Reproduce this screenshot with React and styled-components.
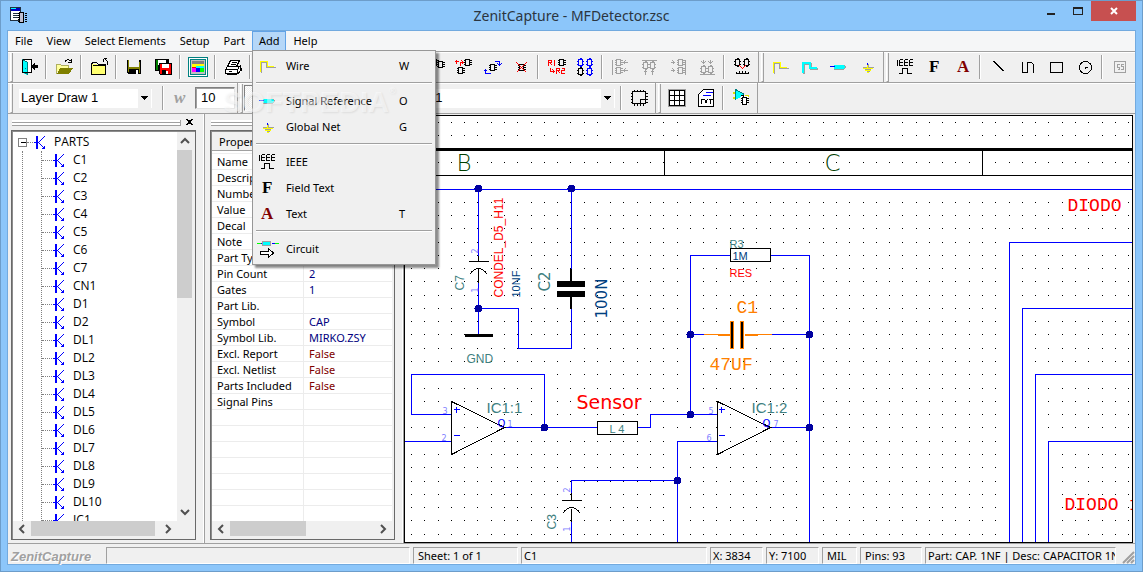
import React from "react";
import styled, { createGlobalStyle, css } from "styled-components";

const GlobalStyle = createGlobalStyle`
  *, *::before, *::after { box-sizing: border-box; }
  body { margin: 0; background: #8cc6fa; }
  button, input, select { font: inherit; color: inherit; margin: 0; padding: 0; border: 0; border-radius: 0; background: none; }
`;

/* ---------- window frame ---------- */

const Window = styled.div`
  position: relative;
  display: flex;
  flex-direction: column;
  height: 100vh;
  min-height: 400px;
  padding: 0 6px 6px;
  border: 1px solid #6d9dca;
  background: #8cc6fa;
  font-family: "Noto Sans", "Open Sans", sans-serif;
  font-size: 11px;
  line-height: 16px;
  color: #000;
  overflow: hidden;
`;
const TitleBar = styled.header`
  display: grid;
  grid-template-columns: 1fr auto 1fr;
  height: 29px;
  flex: none;
`;
const AppIcon = styled.div`
  padding: 6px 0 0 3px;
`;
const Title = styled.h1`
  margin: 0;
  font-size: 14px;
  font-weight: 400;
  line-height: 29px;
  color: #2b3540;
`;
const WindowButtons = styled.div`
  display: flex;
  justify-content: flex-end;
`;
const WindowButton = styled.button`
  width: ${(p) => (p.$close ? 45 : 27)}px;
  height: 20px;
  display: flex;
  align-items: center;
  justify-content: center;
  background: ${(p) => (p.$close ? "#c75050" : "transparent")};
`;
const Client = styled.div`
  flex: 1;
  min-height: 0;
  display: flex;
  flex-direction: column;
  border: 1px solid #72aadf;
  background: #f0f0f0;
`;

/* ---------- menu bar ---------- */

const MenuBar = styled.nav`
  display: flex;
  flex: none;
  height: 20px;
  background: #f5f6f7;
`;
const MenuEntry = styled.div`
  position: relative;
  display: flex;
`;
const MenuButton = styled.button`
  padding: 0 6px;
  border: 1px solid ${(p) => (p.$open ? "#62a3e6" : "transparent")};
  background: ${(p) => (p.$open ? "#b5d7f8" : "transparent")};
`;
const Menu = styled.div`
  position: absolute;
  z-index: 5;
  top: 19px;
  left: 0;
  width: 184px;
  padding: 2px;
  border: 1px solid #979797;
  background: #f0f0f0;
  box-shadow: 3px 3px 2px rgba(0, 0, 0, 0.45);
`;
const MenuItem = styled.button`
  display: grid;
  grid-template-columns: 31px 1fr 34px;
  align-items: center;
  width: 100%;
  height: 26px;
  text-align: left;
`;
const MenuRule = styled.hr`
  height: 9px;
  margin: 0 1px;
  border: 0;
  background: linear-gradient(transparent 3px, #a0a0a0 3px 4px, #fff 4px 5px, transparent 5px);
`;

/* ---------- tool bars ---------- */

const ToolRow = styled.div`
  display: flex;
  flex: none;
  height: 31px;
  border-top: 1px solid #a0a0a0;
  box-shadow: inset 0 1px #fff;
  overflow: hidden;
`;
const ToolGroup = styled.div`
  display: flex;
  align-items: center;
  flex: none;
  padding-right: 2px;
  border-right: 1px solid #a0a0a0;
  &::before {
    content: "";
    align-self: stretch;
    width: 3px;
    margin: 1px 1px 0 2px;
    border: solid;
    border-width: 0 1px 1px;
    border-color: #fff #a0a0a0 #a0a0a0 #fff;
  }
  &:last-child { border-right-width: ${(p) => (p.$open ? 0 : 1)}px; }
`;
const ToolButton = styled.button`
  width: 29px;
  height: 26px;
  flex: none;
  display: flex;
  align-items: center;
  justify-content: center;
  ${(p) => p.$pressed && css`
    border: 1px solid;
    border-color: #808080 #fff #fff #808080;
    background: repeating-conic-gradient(#fff 0 25%, #f0f0f0 0 50%) 0 0 / 2px 2px;
  `}
`;
const ToolRule = styled.span`
  flex: none;
  width: 6px;
  height: 24px;
  background: linear-gradient(90deg, transparent 2px, #a0a0a0 2px 3px, #fff 3px 4px, transparent 4px);
`;
const ComboBox = styled.label`
  position: relative;
  display: flex;
  flex: none;
  width: ${(p) => p.$width}px;
  height: 19px;
  margin: 0 ${(p) => p.$gap}px 0 5px;
  font-family: "Liberation Sans", Arial, sans-serif;
  font-size: 13px;
  background: #fff;
  select {
    appearance: none;
    width: 100%;
    padding-left: 2px;
    line-height: 18px;
  }
`;
const ComboArrow = styled.span`
  position: absolute;
  top: 0;
  right: 1px;
  width: 13px;
  height: 19px;
  display: flex;
  align-items: center;
  justify-content: center;
  background: #f0f0f0;
  pointer-events: none;
`;
const SizeInput = styled.input`
  && {
    width: 40px;
    height: 22px;
    padding: 0 5px 2px;
    border: 1px solid;
    border-color: #808080 #e3e3e3 #e3e3e3 #808080;
    background: #fff;
    box-shadow: inset 1px 1px #a0a0a0;
    font-family: "Liberation Sans", Arial, sans-serif;
    font-size: 13px;
  }
`;

/* ---------- docked panels ---------- */

const Main = styled.main`
  flex: 1;
  min-height: 0;
  display: flex;
  border-top: 1px solid #a0a0a0;
`;
const Dock = styled.section`
  flex: none;
  display: flex;
  flex-direction: column;
  width: ${(p) => p.$left + 194}px;
  padding: 0 8px 3px ${(p) => p.$left}px;
  border-right: 1px solid #a0a0a0;
  box-shadow: inset -1px 0 #fff;
`;
const DockHandle = styled.div`
  flex: none;
  display: flex;
  align-items: center;
  gap: 5px;
  height: 16px;
  padding: 1px 3px 0 1px;
  &::before {
    content: "";
    flex: 1;
    height: 6px;
    border-right: 1px solid #a0a0a0;
    background: repeating-linear-gradient(#fff 0 2px, #a0a0a0 2px 3px);
  }
`;
const DockClose = styled.button`
  display: flex;
`;
const Sunken = styled.div`
  flex: 1;
  min-height: 0;
  display: flex;
  flex-direction: column;
  padding: 1px 2px 2px 1px;
  border: 1px solid #696969;
  background: #f0f0f0;
  box-shadow: inset 1px 1px #8c8c8c;
`;
const ScrollBody = styled.div`
  flex: 1;
  min-height: 0;
  display: flex;
`;
const Viewport = styled.div`
  flex: 1;
  min-width: 0;
  padding-top: ${(p) => p.$top || 0}px;
  overflow: hidden;
  background: #fff;
`;
const Bar = styled.div`
  flex: none;
  display: flex;
  flex-direction: ${(p) => (p.$vertical ? "column" : "row")};
  width: ${(p) => (p.$vertical ? "16px" : "auto")};
  height: ${(p) => (p.$vertical ? "auto" : "16px")};
  margin-right: ${(p) => (p.$corner ? 16 : 0)}px;
  background: #f0f0f0;
`;
const BarArrow = styled.button`
  flex: none;
  width: ${(p) => (p.$vertical ? 15 : 18)}px;
  height: ${(p) => (p.$vertical ? 18 : 15)}px;
  display: flex;
  align-items: center;
  justify-content: center;
`;
const BarTrack = styled.div`
  flex: 1;
`;
const BarThumb = styled.div`
  width: ${(p) => (p.$vertical ? "15px" : p.$part)};
  height: ${(p) => (p.$vertical ? p.$part : "15px")};
  background: #cdcdcd;
`;

const TreeRow = styled.div`
  display: flex;
  align-items: center;
  height: 18px;
`;
const Expander = styled.button`
  display: flex;
  margin-left: 5px;
`;
const Branch = styled.span`
  width: ${(p) => p.$width}px;
  border-top: 1px dotted #808080;
`;
const TreeLabel = styled.span`
  margin-left: 9px;
  font-family: "Open Sans", "Noto Sans", sans-serif;
  font-size: 12px;
`;
const RootItems = styled.div`
  margin-left: 9px;
  padding-left: 18px;
  border-left: 1px dotted #808080;
`;
const TreeList = styled.ul`
  margin: 0;
  padding: 0;
  list-style: none;
  border-left: 1px dotted #808080;
`;

const PropTable = styled.table`
  width: 100%;
  table-layout: fixed;
  border-collapse: separate;
  border-spacing: 0;
  th, td {
    padding: 0 0 0 5px;
    font-weight: 400;
    text-align: left;
    white-space: nowrap;
    overflow: hidden;
  }
  thead th {
    height: 22px;
    padding: 0 0 2px 7px;
    background: linear-gradient(#f0f0f0 18px, #a0a0a0 18px 19px, #fff 19px 21px, #eee 21px);
  }
  thead th:first-child { width: 92px; }
  tbody th, tbody td {
    height: 16px;
    line-height: 15px;
    border-bottom: 1px solid #ececec;
  }
  tbody th { border-right: 1px solid #ececec; }
`;
const PropValue = styled.td`
  color: ${(p) => (p.$flag ? "#800000" : "#000080")};
`;

const Canvas = styled.section`
  flex: 1;
  min-width: 0;
  margin: 1px 2px 0 0;
  border: 1px solid #000;
  background: #fff;
  overflow: hidden;
  svg { display: block; width: 100%; height: 100%; }
`;

/* ---------- status bar ---------- */

const StatusBar = styled.footer`
  flex: none;
  display: flex;
  gap: 3px;
  height: 21px;
  padding-top: 3px;
  border-top: 1px solid #a0a0a0;
`;
const Brand = styled.strong`
  width: 95px;
  padding-left: 3px;
  font-family: "Liberation Sans", Arial, sans-serif;
  font-size: 13px;
  font-style: italic;
  line-height: 19px;
  color: #a0a0a0;
  text-shadow: 1px 1px #fff;
`;
const Cell = styled.div`
  flex: ${(p) => (p.$grow ? `${p.$width} 1 0` : `0 0 ${p.$width}px`)};
  min-width: 0;
  padding-left: ${(p) => p.$pad || 2}px;
  border: 1px solid;
  border-color: #a0a0a0 #fff #fff #a0a0a0;
  line-height: 15px;
  white-space: nowrap;
  overflow: hidden;
`;
const Grip = styled.div`
  flex: 1;
  min-width: 16px;
  display: flex;
  align-items: flex-end;
  justify-content: flex-end;
`;
const Watermark = styled.div`
  position: absolute;
  z-index: 6;
  left: 222px;
  top: 84px;
  display: flex;
  align-items: flex-start;
  font-family: "Liberation Sans", Arial, sans-serif;
  font-size: 29px;
  font-weight: 700;
  line-height: 34px;
  color: rgba(255, 255, 255, 0.5);
  text-shadow: 1px 1px 2px rgba(0, 0, 0, 0.08);
  pointer-events: none;
  sup { font-size: 9px; line-height: 12px; }
`;

/* ---------- icons ---------- */

const Art = ({ w = 24, h = 22, children }) => (
  <svg width={w} height={h} viewBox={`0 0 ${w} ${h}`} shapeRendering="crispEdges" fill="none" aria-hidden="true">
    {children}
  </svg>
);
const Line = ({ d, c = "#000", w = 1 }) => (
  <path d={d} stroke={c} strokeWidth={w} transform="translate(.5 .5)" />
);
const Chip = ({ x, y, c = "#000" }) => (
  <g transform={`translate(${x} ${y})`}>
    <Line c={c} d="M1 0h4v6h-4zM-1 1h2M-1 3h2M-1 5h2M5 1h2M5 3h2M5 5h2" />
  </g>
);
const TallChip = ({ x, y, c = "#000" }) => (
  <g transform={`translate(${x} ${y})`}>
    <Line c={c} d="M1 1h4v6h-4zM0 2v1M0 5v1M6 2v1M6 5v1M2 0h2M2 8h2" />
  </g>
);

const icons = {
  exit: <><path d="M7 3h8v13H7z" fill="#fff" /><Line d="M5 3h9v13h-4" /><path d="M5 3l5 3v13l-5-3z" fill="#0ff" /><Line d="M5 3v12l5 3V6L5 3M8 11v1" c="#008080" /><Line d="M5 3v13h5" /><path d="M14 10l4-4v3h3v3h-3v3z" fill="#000" /></>,
  open: <><path d="M4 8h5v1h7v3H9l-5 6z" fill="#ffff9c" /><Line d="M4 17V8h4l1 1h7v2" c="#b0b060" /><path d="M8 12h13l-4 6H5z" fill="#808000" /><Line d="M12 6q3-5 7-1M19 2v4h-4" /></>,
  folder: <><path d="M4 8h5l2 1h7v10H4z" fill="#ffff70" /><Line d="M4 18V8l1-2h4l2 2h7v10zM5 9h12" /><Line d="M20 8V5l-3-3M16 2h3M16 2v3" /></>,
  save: <><path d="M5 4h14v14H6l-1-1z" fill="#000" /><path d="M7 4h10v7H7z" fill="#f0f0f0" /><path d="M6 4h1v12H6zM17 6h1v11h-1zM7 11h10v2H7z" fill="#808000" /><path d="M14 14h2v4h-2z" fill="#fff" /></>,
  saveAll: <><path d="M4 3h14v12H4z" fill="#000" /><path d="M5 4h2v10H5z" fill="#008000" /><path d="M7 4h8v5H7z" fill="#fff" /><path d="M8 7h13v12H9l-1-1z" fill="#000" /><path d="M9 8h11v10H9z" fill="red" /><path d="M11 8h7v4h-7zM15 15h2v3h-2z" fill="#fff" /><path d="M11 14h4v4h-4z" fill="#000" /></>,
  palette: <><path d="M2 1h20v20H2z" fill="#008080" /><path d="M3 2h18v18H3z" fill="#fff" /><path d="M4 3h16v16H4z" fill="#008080" /><path d="M5 4h14v14H5z" fill="#c0c0c0" /><path d="M6 5h12v3H6z" fill="#808080" /><path d="M6 8h12v3H6z" fill="#ff0" /><path d="M6 11h4v2H6z" fill="red" /><path d="M10 10h8v2h-8z" fill="#0ff" /><path d="M6 12h6v4H6z" fill="#f0f" /><path d="M10 12h4v4h-4z" fill="#00f" /><path d="M14 12h4v4h-4z" fill="lime" /></>,
  print: <><path d="M9 4h10l-3 7H6z" fill="#fff" /><Line d="M9 4h9l-3 6M9 4l-3 6M10 6h5M9 8h5" /><path d="M6 10h13l1-1v7l-2 2H6l-2-2v-4z" fill="#fff" /><Line d="M6 10h12l-2 3H4l2-3M4 13v4h12v-4M18 10l1-1v5l-3 3M6 17v1h9l4-3M7 15h3M20 11v3" /></>,
  chip: <><Chip x="9" y="3" /><Chip x="15" y="5" /></>,
  chipAdd: <><Chip x="13" y="3" /><Chip x="6" y="11" /><Line c="red" d="M3 5h4M5 3v4M9 9V6h2M10 4l2 2-2 2" /></>,
  chipMove: <><Chip x="9" y="8" /><Line c="#00f" d="M14 5h5v4M17 7l2 2 2-2M10 17H5v-4M3 15l2-2 2 2" /></>,
  chipDel: <><Chip x="9" y="8" /><Line c="red" d="M7 6l10 10M17 6L7 16" /></>,
  rename: <><Line c="red" d="M4 9V4h3v2H4M6 6l1 3M9 5l1-1v5M12 17v-5h3v2h-3M14 14l1 3M17 12h3v2h-3v3h3M6 11v4h4M8 13l2 2-2 2" /><Chip x="14" y="3" /></>,
  chips4: <><TallChip x="4" y="2" c="#00f" /><TallChip x="13" y="2" c="#00f" /><TallChip x="4" y="11" /><TallChip x="13" y="11" c="#00f" /></>,
  alignL: <><Line c="#a0a0a0" d="M4 3v15M15 6h4M15 6l2-2M15 6l2 2M15 14h4M15 14l2-2M15 14l2 2" /><Chip x="7" y="3" c="#a0a0a0" /><Chip x="7" y="11" c="#a0a0a0" /></>,
  alignT: <><Line c="#a0a0a0" d="M4 4h15M8 14v4M6 16l2-2 2 2M15 14v4M13 16l2-2 2 2" /><TallChip x="5" y="5" c="#a0a0a0" /><TallChip x="12" y="5" c="#a0a0a0" /></>,
  alignR: <><Line c="#a0a0a0" d="M19 3v15M4 6h4M8 6L6 4M8 6L6 8M4 14h4M8 14l-2-2M8 14l-2 2" /><Chip x="11" y="3" c="#a0a0a0" /><Chip x="11" y="11" c="#a0a0a0" /></>,
  alignB: <><Line c="#a0a0a0" d="M4 18h15M8 3v4M6 5l2 2 2-2M15 3v4M13 5l2 2 2-2" /><TallChip x="5" y="9" c="#a0a0a0" /><TallChip x="12" y="9" c="#a0a0a0" /></>,
  measure: <><TallChip x="4" y="2" /><TallChip x="13" y="2" /><Line c="red" d="M9 9l3 3 3-3" /><Line d="M6 17h12M6 15v2M9 14v3M12 14v3M15 14v3M18 15v2" /></>,
  wire: <><Line c="#a0a0a0" d="M6 17V7h5v5h9" /><Line c="#ff0" d="M5 16V6h7v5h6" /></>,
  bus: <><Line c="#a0a0a0" w={2} d="M6 17V7h7v5h7" /><Line c="#0ff" w={2} d="M5 16V6h7v5h7" /></>,
  signal: <><path d="M8 9h10l2 2-2 3H8z" fill="#a0a0a0" /><path d="M8 9h9l2 2-2 2H8z" fill="#0ff" /><Line c="#00f" d="M3 10h5" /></>,
  ground: <><Line c="#a0a0a0" d="M7 11h11M9 13h6M11 15h3M13 7v4" /><Line c="#ff0" d="M12 8v4M7 12h10M9 14h6M11 16h2" /><Line c="#00f" d="M12 6v2" /></>,
  ieee: <Line d="M4 3v6M6 3h3M6 6h3M6 9h3M6 3v6M11 3h3M11 6h3M11 9h3M11 3v6M16 3h3M16 6h3M16 9h3M16 3v6M5 17h4v-5h5v5h4" />,
  field: <text x="7" y="16" fill="#000" fontFamily="Liberation Serif, serif" fontSize="17" fontWeight="700">F</text>,
  text: <text x="6" y="16" fill="#800000" fontFamily="Liberation Serif, serif" fontSize="17" fontWeight="700">A</text>,
  line: <Line d="M7 5l10 10M8 5l10 10" />,
  polyline: <Line d="M7 5v11h5V6h4l2 2v8" />,
  rect: <Line d="M6 6h12v10H6z" />,
  circle: <><circle cx="12.500" cy="11.500" r="6" stroke="#000" /><Line d="M12 10v2M11 11h3" /></>,
  bitmap: <><Line c="#a0a0a0" d="M6 5h11v11H6zM11 8H9v3h2v2H9M15 8h-2v2h2v3h-3" /></>,
  weight: <text x="5" y="16" fill="#a0a0a0" fontFamily="Liberation Serif, serif" fontSize="17" fontWeight="700" fontStyle="italic">w</text>,
  lines: <Line w={2} d="M5 5h14M5 10h14M5 15h14" />,
  sheet: <><Line d="M5 4h13v12H5zM13 16v-4h5" /><Line d="M7 2v2M10 2v2M13 2v2M16 2v2M7 16v2M10 16v2M13 16v2M16 16v2M3 6h2M3 9h2M3 12h2M3 15h2M18 6h2M18 9h2M18 12h2M18 15h2" /></>,
  grid: <><path d="M3 2h18v18H3z" fill="#a0a0a0" /><path d="M4 3h16v16H4z" fill="#fff" /><Line d="M4 3h15v15H4zM9 3v15M14 3v15M4 8h15M4 13h15" /></>,
  txt: <><path d="M9 2h11v17H4V7z" fill="#fff" /><Line d="M9 2h10v17H4V7zM6 12h3M7 12v4M10 12l3 4M13 12l-3 4M14 12h4M16 12v4" /><Line c="#00f" d="M11 5h7M8 8h8" /></>,
  convert: <><Line c="#e0e000" w={2} d="M3 5h3M3 10h3M15 8h4" /><path d="M6 2l10 6-10 5z" fill="#0ff" /><Line d="M6 2v10M6 2l9 5" c="#008080" /><path d="M12 9h7v9h-7z" fill="#fff" /><Line d="M13 10h4v7h-4zM11 11h2M11 13h2M11 15h2M17 11h2M17 13h2M17 15h2M11 8h3v2" /></>,
  undo: <Line d="M6 10h10v5M6 10l3-3M6 10l3 3" />,
  circuit: <><Line c="lime" d="M1 5h4M19 5h4" /><Line c="#00f" d="M5 5h2M16 5h3" /><path d="M7 3h9v5H7z" fill="#a0a0a0" /><path d="M8 4h7v3H8z" fill="#0ff" /><path d="M5.500 13.500h8v-3l5 4.500-5 4.500v-3h-8z" fill="#fff" stroke="#000" /></>,
};

const Tool = ({ icon, label, pressed }) => (
  <ToolButton type="button" aria-label={label} $pressed={pressed}>
    <Art>{icons[icon]}</Art>
  </ToolButton>
);
const Tools = ({ items }) =>
  items.map((item, i) =>
    item === "|" ? <ToolRule key={i} /> : <Tool key={i} icon={item[0]} label={item[1]} pressed={item[2]} />
  );

const Combo = ({ label, value, width, gap }) => (
  <ComboBox $width={width} $gap={gap}>
    <select aria-label={label} defaultValue={value}>
      <option>{value}</option>
    </select>
    <ComboArrow>
      <Art w={7} h={4}><path d="M0 0h7L3.500 4z" fill="#000" /></Art>
    </ComboArrow>
  </ComboBox>
);

const chevrons = {
  up: "M1 7l4-4 4 4",
  down: "M1 3l4 4 4-4",
  left: "M7 1L3 5l4 4",
  right: "M3 1l4 4-4 4",
};
const Chevron = ({ to }) => (
  <svg width="10" height="10" viewBox="0 0 10 10" aria-hidden="true">
    <path d={chevrons[to]} fill="none" stroke="#505050" strokeWidth="2" />
  </svg>
);
const ScrollBar = ({ vertical, part, corner }) => (
  <Bar $vertical={vertical} $corner={corner}>
    <BarArrow type="button" $vertical={vertical} aria-label="Scroll back"><Chevron to={vertical ? "up" : "left"} /></BarArrow>
    <BarTrack><BarThumb $vertical={vertical} $part={part} /></BarTrack>
    <BarArrow type="button" $vertical={vertical} aria-label="Scroll forward"><Chevron to={vertical ? "down" : "right"} /></BarArrow>
  </Bar>
);

const PartIcon = () => (
  <Art w={12} h={13}>
    <path d="M3 0h2v13H3z" fill="#00f" />
    <Line c="#00f" d="M0 6h4M5 6l6-6M5 6l6 6M11 9v3h-3" />
  </Art>
);

/* ---------- schematic ---------- */

const STEP = 13.28;
const dots = [];
for (let row = 0; row < 90; row++) {
  if (row === 4 || row === 5 || row === 2) continue;
  for (let col = 0; col < 160; col++) {
    dots.push(`M${Math.round(411 + col * STEP)} ${Math.round(122 + row * STEP)}h1`);
  }
}
const gridPath = dots.join("");

const Label = ({ x, y, size, c, up, weight = 400, font = "DejaVu Sans", children }) => (
  <text
    transform={`translate(${x} ${y})${up ? " rotate(-90)" : ""}`}
    fill={c}
    fontSize={size}
    fontWeight={weight}
    fontFamily={`"${font}", sans-serif`}
  >
    {children}
  </text>
);

const TEAL = "#408080";
const NAVY = "#004080";
const PIN = "#8080ff";
const ORANGE = "#ff8000";
const junctions = [[478, 188], [571, 188], [478, 308], [544, 427], [690, 334], [690, 414], [809, 334], [809, 427], [677, 480]];

const Schematic = () => (
  <svg role="img" aria-label="Schematic sheet">
    <g transform="translate(-404.500 -115.500)" fill="none" shapeRendering="crispEdges">
      <path d={gridPath} stroke="#000" transform="translate(-.5 0)" />
      <g stroke="#000">
        <path d="M400 149h1600" strokeWidth="3" />
        <path d="M400 175h1600M664 150v25M982 150v25" />
      </g>
      <g stroke="#00f">
        <path d="M400 189h1600M478 189v66M478 282v51M478 308h40v40h53v-40M571 189v80" />
        <path d="M451 414h-40v-40h133v53M504 427h93M400 441h51M637 427h13v-13h67" />
        <path d="M690 414V255h40M770 255h39v1500M690 334h13M771 334h38M770 427h39" />
        <path d="M717 441h-40v1300M677 480H571v12M571 521v1300" />
        <path d="M2000 242H1009v1500M2000 308H1022v1500M2000 374H1035v1500M2000 441H1048v1500" />
      </g>
      <g stroke="#000">
        <path d="M478 255v6M468 261h20M478 268v14M571 492v8M561 500h20M571 508v13" />
        <path d="M469 274q9-12 18 0M562 513q9-12 18 0" />
        <path d="M464 335h28" strokeWidth="3" />
        <path d="M570.500 268v14M570.500 296v12" strokeWidth="2" />
        <path d="M730 248h40v13h-40zM597 421h40v13h-40z" fill="#fff" />
        <path d="M451 401v53l53-27zM717 401v53l53-27z" />
      </g>
      <path d="M557 281h27v5h-27zM557 291h27v5h-27z" fill="#000" stroke="#000" />
      <path d="M703 334h14M757 334h14" stroke={ORANGE} />
      <path d="M717 334.500h13M744 334.500h13" stroke={ORANGE} strokeWidth="2" />
      <path d="M730 321h3v27h-3zM740 321h3v27h-3z" fill="#000" stroke={ORANGE} />
      <path d="M453 409h6M456 406v6M453 435h6M718 409h6M721 406v6M718 435h6" stroke="#00f" />
      {junctions.map(([x, y]) => (
        <circle key={`${x}-${y}`} cx={x} cy={y} r="4" fill="#0000a0" />
      ))}
      <Label x={456} y={170} size={23} weight={200} c="#004000">B</Label>
      <Label x={824} y={170} size={23} weight={200} c="#004000">C</Label>
      <Label x={463} y={290} size={12} font="Liberation Sans" up c={TEAL}>C7</Label>
      <Label x={502} y={297} size={12} font="Liberation Sans" up c="red">CONDEL_D5_H11</Label>
      <Label x={519} y={297} size={11} font="Liberation Sans" up c={NAVY}>10NF</Label>
      <Label x={549} y={291} size={15} up c={TEAL}>C2</Label>
      <Label x={606} y={318} size={15} up c={NAVY}>100N</Label>
      <Label x={466} y={362} size={12} font="Liberation Sans" c={TEAL}>GND</Label>
      <Label x={477} y={253} size={8} up c={PIN}>2</Label>
      <Label x={477} y={292} size={8} up c={PIN}>1</Label>
      <Label x={729} y={247} size={11} font="Liberation Sans" c={TEAL}>R3</Label>
      <Label x={732} y={259} size={11} font="Liberation Sans" c={NAVY}>1M</Label>
      <Label x={729} y={276} size={11} font="Liberation Sans" c="red">RES</Label>
      <Label x={736} y={312} size={18} font="Liberation Mono" c={ORANGE}>C1</Label>
      <Label x={709} y={369} size={18} font="Liberation Mono" c={ORANGE}>47UF</Label>
      <Label x={486} y={412} size={15} font="Liberation Sans" c={TEAL}>IC1:1</Label>
      <Label x={751} y={412} size={15} font="Liberation Sans" c={TEAL}>IC1:2</Label>
      <Label x={576} y={408} size={19} c="red">Sensor</Label>
      <Label x={609} y={432} size={11} font="Liberation Sans" c={TEAL}>L 4</Label>
      <Label x={497} y={426} size={10} c="#00f">Q</Label>
      <Label x={762} y={426} size={10} c="#00f">Q</Label>
      <Label x={442} y={413} size={8} c={PIN}>3</Label>
      <Label x={441} y={440} size={8} c={PIN}>2</Label>
      <Label x={507} y={426} size={8} c={PIN}>1</Label>
      <Label x={708} y={413} size={8} c={PIN}>5</Label>
      <Label x={706} y={440} size={8} c={PIN}>6</Label>
      <Label x={773} y={426} size={8} c={PIN}>7</Label>
      <Label x={555} y={529} size={12} font="Liberation Sans" up c={TEAL}>C3</Label>
      <Label x={569} y={492} size={8} up c={PIN}>2</Label>
      <Label x={569} y={531} size={8} up c={PIN}>1</Label>
      <Label x={1067} y={210} size={18} font="Liberation Mono" c="red">DIODO</Label>
      <Label x={1064} y={509} size={18} font="Liberation Mono" c="red">DIODO 1</Label>
    </g>
  </svg>
);

/* ---------- data ---------- */

const addMenu = [
  ["wire", "Wire", "W"], null,
  ["signal", "Signal Reference", "O"], ["ground", "Global Net", "G"], null,
  ["ieee", "IEEE"], ["field", "Field Text"], ["text", "Text", "T"], null,
  ["circuit", "Circuit"],
];
const parts = ["C1", "C2", "C3", "C4", "C5", "C6", "C7", "CN1", "D1", "D2", "DL1", "DL2", "DL3", "DL4", "DL5", "DL6", "DL7", "DL8", "DL9", "DL10", "IC1"];
const properties = [
  ["Name", ""], ["Description", ""], ["Number", ""], ["Value", ""], ["Decal", ""], ["Note", ""], ["Part Type", ""],
  ["Pin Count", "2"], ["Gates", "1"], ["Part Lib.", ""], ["Symbol", "CAP"], ["Symbol Lib.", "MIRKO.ZSY"],
  ["Excl. Report", "False"], ["Excl. Netlist", "False"], ["Parts Included", "False"], ["Signal Pins", ""],
  ...Array.from({ length: 7 }, () => ["", ""]),
];

const mainTools = [
  ["exit", "Exit"], "|", ["open", "Open"], "|", ["folder", "Library"], "|", ["save", "Save"], ["saveAll", "Save all"], "|",
  ["palette", "Colours"], "|", ["print", "Print"], "|", ["undo", "Undo"], ["undo", "Redo"], "|", ["chip", "Cut"], ["chip", "Copy"], "|", ["chip", "Paste"],
];
const partTools = [
  ["chip", "Part"], ["chipAdd", "Add part"], ["chipMove", "Rotate part"], ["chipDel", "Delete part"], "|",
  ["rename", "Rename"], ["chips4", "Group"], "|",
  ["alignL", "Align left"], ["alignT", "Align top"], ["alignR", "Align right"], ["alignB", "Align bottom"], "|", ["measure", "Spacing"],
];
const netTools = [["wire", "Wire"], ["bus", "Bus"], ["signal", "Signal reference"], ["ground", "Global net"]];
const drawTools = [
  ["ieee", "IEEE"], ["field", "Field text"], ["text", "Text"], "|",
  ["line", "Line"], ["polyline", "Polyline"], ["rect", "Rectangle"], ["circle", "Circle"], "|", ["bitmap", "Refresh"],
];

const AddMenu = () => (
  <Menu role="menu">
    {addMenu.map((item, i) =>
      item ? (
        <MenuItem key={i} type="button" role="menuitem">
          <Art>{icons[item[0]]}</Art>
          <span>{item[1]}</span>
          <span>{item[2]}</span>
        </MenuItem>
      ) : (
        <MenuRule key={i} />
      )
    )}
  </Menu>
);

const Handle = ({ label }) => (
  <DockHandle>
    <DockClose type="button" aria-label={label}>
      <Art w={7} h={7}><path d="M0 0h2v1h3V0h2v1H6v1H5v2h1v1h1v1H5V5H2v1H0V5h1V4h1V2H1V1H0z" fill="#000" /></Art>
    </DockClose>
  </DockHandle>
);

export default function App() {
  return (
    <Window>
      <GlobalStyle />
      <TitleBar>
        <AppIcon>
          <Art w={17} h={17}>
            <path d="M0 0h11v14H0z" fill="#fff" /><path d="M0 0h11v4H0z" fill="#0000c0" /><path d="M1 1h5v1H1z" fill="#0ff" />
            <Line d="M0 0h10v13H0zM2 6h5M2 8h5M2 10h5" c="#203040" />
            <path d="M9 5h5v11H9z" fill="#c0c0d0" /><Line d="M9 5h4v10H9zM7 6h2M7 8h2M7 10h2M7 12h2M7 14h2M14 6h2M14 8h2M14 10h2M14 12h2M14 14h2" />
          </Art>
        </AppIcon>
        <Title>ZenitCapture - MFDetector.zsc</Title>
        <WindowButtons>
          <WindowButton type="button" aria-label="Minimize"><Art w={10} h={10}><path d="M1 7h8v2H1z" fill="#222" /></Art></WindowButton>
          <WindowButton type="button" aria-label="Maximize"><Art w={10} h={8}><path d="M0 0h10v8H0zM1 2v5h8V2z" fill="#222" fillRule="evenodd" /></Art></WindowButton>
          <WindowButton type="button" aria-label="Close" $close>
            <svg width="8" height="8" viewBox="0 0 8 8" aria-hidden="true"><path d="M1 1l6 6M7 1L1 7" stroke="#fff" strokeWidth="2" /></svg>
          </WindowButton>
        </WindowButtons>
      </TitleBar>
      <Client>
        <MenuBar>
          {["File", "View", "Select Elements", "Setup", "Part", "Add", "Help"].map((name) => (
            <MenuEntry key={name}>
              <MenuButton type="button" $open={name === "Add"}>{name}</MenuButton>
              {name === "Add" && <AddMenu />}
            </MenuEntry>
          ))}
        </MenuBar>
        <ToolRow>
          <ToolGroup><Tools items={mainTools} /></ToolGroup>
          <ToolGroup><Tools items={partTools} /></ToolGroup>
          <ToolGroup><Tools items={netTools} /></ToolGroup>
          <ToolGroup $open><Tools items={drawTools} /></ToolGroup>
        </ToolRow>
        <ToolRow>
          <ToolGroup>
            <Combo label="Layer" value="Layer Draw 1" width={133} gap={8} />
            <Tools items={["|", ["weight", "Line width"]]} />
            <SizeInput aria-label="Width" defaultValue="10" />
          </ToolGroup>
          <ToolGroup>
            <Tools items={[["lines", "Solid line", true], ["lines", "Dashed line"], "|", ["lines", "Dotted line"], ["lines", "Line style"], "|"]} />
            <Combo label="Text size" value="Text Size:1" width={238} gap={3} />
            <Tools items={["|", ["sheet", "Sheet"]]} />
          </ToolGroup>
          <ToolGroup>
            <Tools items={[["grid", "Grid"], ["txt", "Text report"], "|", ["convert", "Convert"]]} />
          </ToolGroup>
        </ToolRow>
        <Main>
          <Dock $left={3}>
            <Handle label="Close parts" />
            <Sunken>
              <ScrollBody>
                <Viewport $top={1}>
                  <TreeRow>
                    <Expander type="button" aria-label="Collapse">
                      <Art w={9} h={9}><path d="M0 0h9v9H0z" fill="#fff" /><Line c="#808080" d="M0 0h8v8H0z" /><Line d="M2 4h5" /></Art>
                    </Expander>
                    <Branch $width={6} />
                    <PartIcon />
                    <TreeLabel>PARTS</TreeLabel>
                  </TreeRow>
                  <RootItems>
                    <TreeList>
                      {parts.map((part) => (
                        <li key={part}>
                          <TreeRow>
                            <Branch $width={10} />
                            <PartIcon />
                            <TreeLabel>{part}</TreeLabel>
                          </TreeRow>
                        </li>
                      ))}
                    </TreeList>
                  </RootItems>
                </Viewport>
                <ScrollBar vertical part="42%" />
              </ScrollBody>
              <ScrollBar part="97%" corner />
            </Sunken>
          </Dock>
          <Dock $left={5}>
            <Handle label="Close properties" />
            <Sunken>
              <ScrollBody>
                <Viewport>
                  <PropTable>
                    <thead>
                      <tr><th scope="col">Property</th><th scope="col">Value</th></tr>
                    </thead>
                    <tbody>
                      {properties.map(([name, value], i) => (
                        <tr key={i}>
                          <th scope="row">{name}</th>
                          <PropValue $flag={value === "False"}>{value}</PropValue>
                        </tr>
                      ))}
                    </tbody>
                  </PropTable>
                </Viewport>
              </ScrollBody>
              <ScrollBar part="53%" />
            </Sunken>
          </Dock>
          <Canvas><Schematic /></Canvas>
        </Main>
        <StatusBar>
          <Brand>ZenitCapture</Brand>
          <Cell $width={305} $grow />
          <Cell $width={105} $pad={4}>Sheet: 1 of 1</Cell>
          <Cell $width={185} $grow>C1</Cell>
          <Cell $width={53}>X: 3834</Cell>
          <Cell $width={53}>Y: 7100</Cell>
          <Cell $width={35} $pad={4}>MIL</Cell>
          <Cell $width={62} $pad={4}>Pins: 93</Cell>
          <Cell $width={191}>Part: CAP. 1NF | Desc: CAPACITOR 1NF</Cell>
          <Grip>
            <svg width="13" height="13" viewBox="0 0 13 13" aria-hidden="true">
              <path d="M1 12L12 1M5 12l7-7M9 12l3-3" stroke="#a0a0a0" strokeWidth="2" />
            </svg>
          </Grip>
        </StatusBar>
      </Client>
      <Watermark aria-hidden="true">SOFTPEDIA<sup>®</sup></Watermark>
    </Window>
  );
}
